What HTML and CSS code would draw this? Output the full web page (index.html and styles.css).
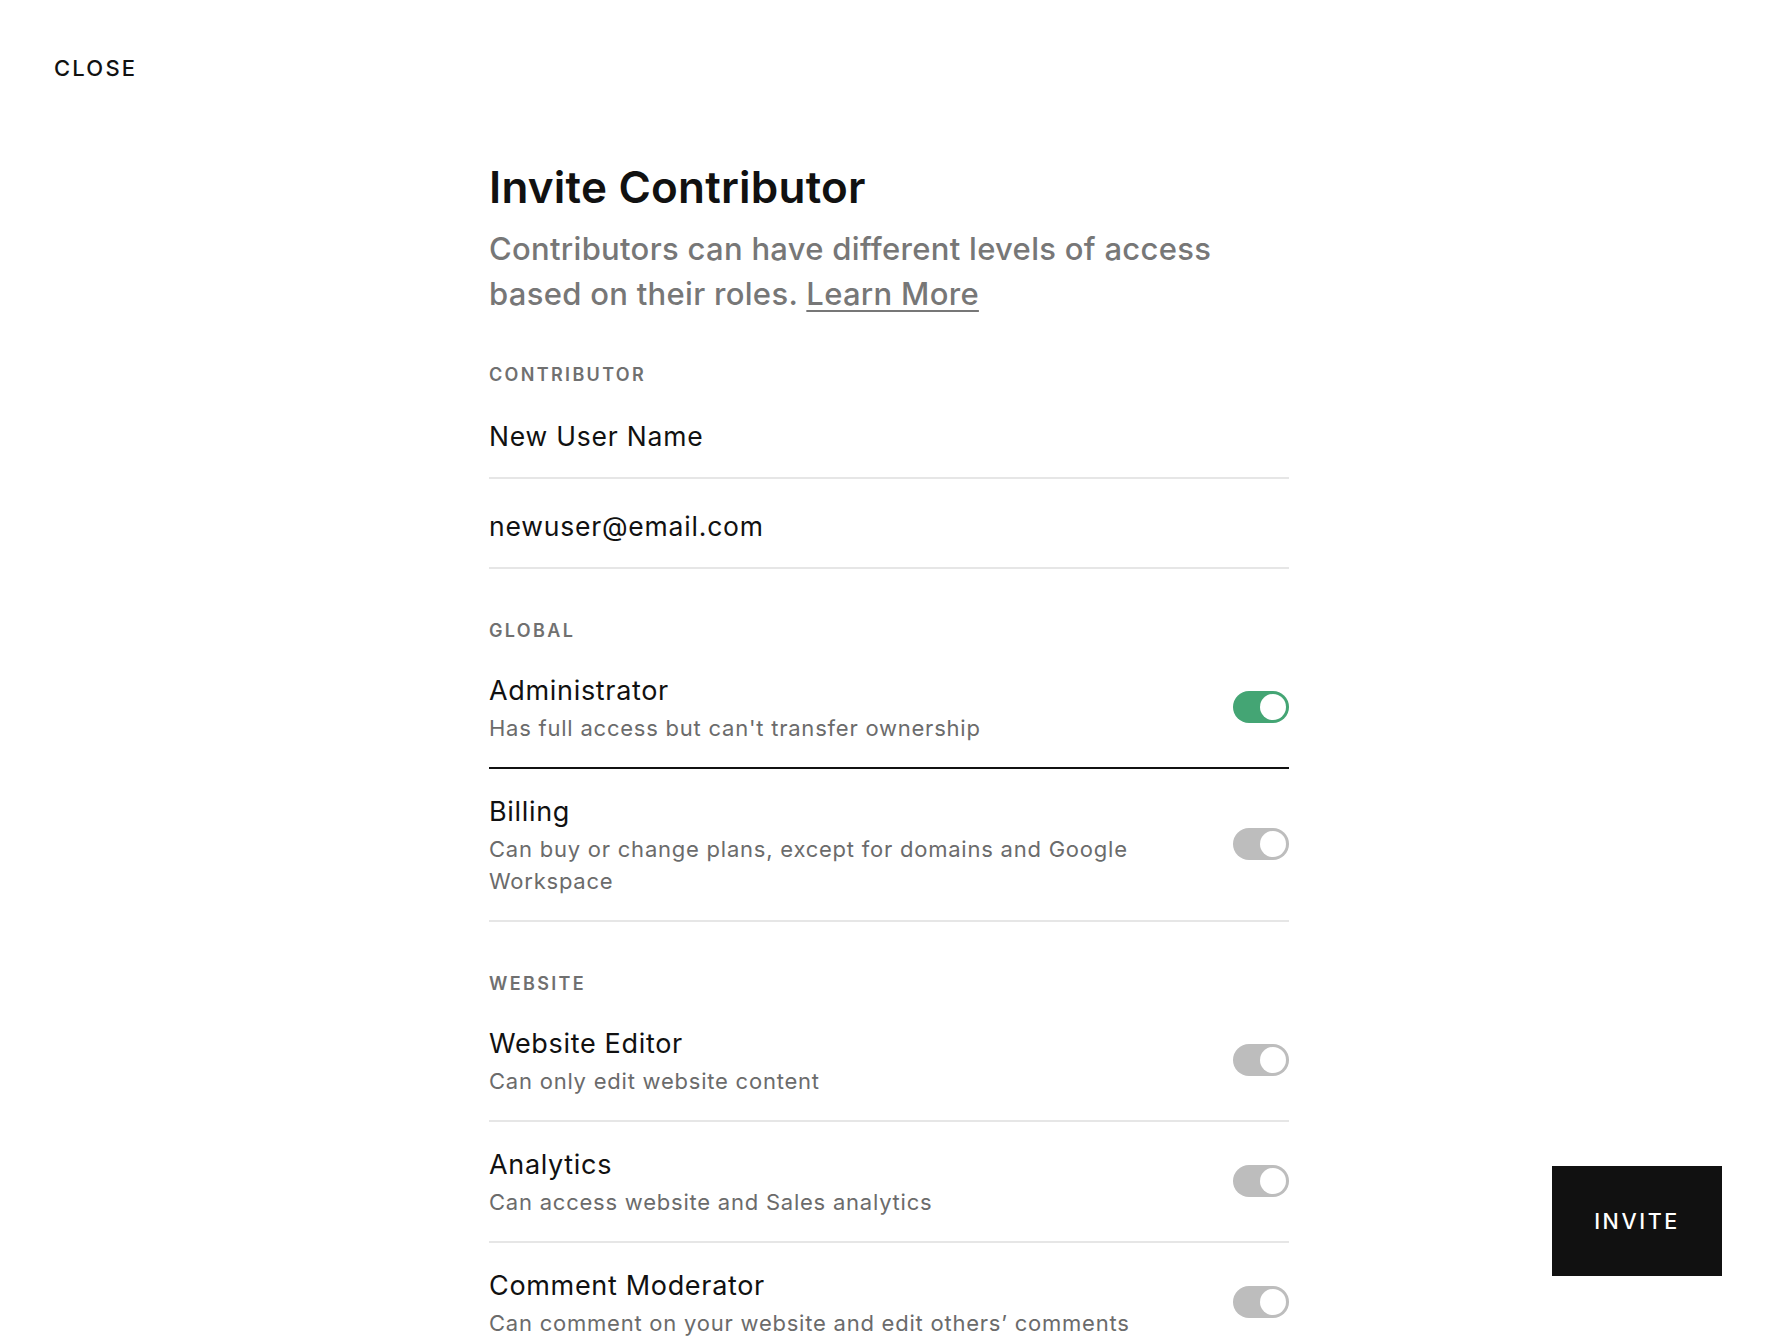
FILE: index.html
```html
<!DOCTYPE html>
<html lang="en">
<head>
<meta charset="utf-8">
<title>Invite Contributor</title>
<link rel="stylesheet" href="styles.css">
</head>
<body>
<header class="topbar">
  <a class="close" href="#">CLOSE</a>
</header>
<main class="panel">
  <h1 class="title">Invite Contributor</h1>
  <p class="intro">Contributors can have different levels of access based on their roles. <a class="learn" href="#">Learn More</a></p>

  <section class="group group-first">
    <h2 class="label">CONTRIBUTOR</h2>
    <div class="field">New User Name</div>
    <div class="field">newuser@email.com</div>
  </section>

  <section class="group">
    <h2 class="label">GLOBAL</h2>
    <div class="row row-active">
      <div class="row-text">
        <div class="row-title">Administrator</div>
        <div class="row-desc">Has full access but can't transfer ownership</div>
      </div>
      <span class="toggle toggle-on"><span class="knob"></span></span>
    </div>
    <div class="row">
      <div class="row-text">
        <div class="row-title">Billing</div>
        <div class="row-desc">Can buy or change plans, except for domains and Google Workspace</div>
      </div>
      <span class="toggle"><span class="knob"></span></span>
    </div>
  </section>

  <section class="group">
    <h2 class="label">WEBSITE</h2>
    <div class="row">
      <div class="row-text">
        <div class="row-title">Website Editor</div>
        <div class="row-desc">Can only edit website content</div>
      </div>
      <span class="toggle"><span class="knob"></span></span>
    </div>
    <div class="row">
      <div class="row-text">
        <div class="row-title">Analytics</div>
        <div class="row-desc">Can access website and Sales analytics</div>
      </div>
      <span class="toggle"><span class="knob"></span></span>
    </div>
    <div class="row">
      <div class="row-text">
        <div class="row-title">Comment Moderator</div>
        <div class="row-desc">Can comment on your website and edit others’ comments</div>
      </div>
      <span class="toggle"><span class="knob"></span></span>
    </div>
  </section>
</main>
<button class="invite" type="button">INVITE</button>
</body>
</html>
```
FILE: styles.css
```css
* { box-sizing: border-box; }
html, body { margin: 0; padding: 0; background: #fff; }
body {
  font-family: Inter, "Noto Sans", "Liberation Sans", sans-serif;
  color: #111;
}
.topbar {
  padding: 56px 54px 0;
  height: 81px;
}
.close {
  display: inline-block;
  font-size: 22px;
  line-height: 25px;
  font-weight: 500;
  letter-spacing: 0.1em;
  color: #111;
  text-decoration: none;
}
.panel {
  width: 800px;
  margin-left: calc(50% - 402px);
  padding-top: 80px;
}
.title {
  margin: 0;
  font-size: 44px;
  line-height: 52px;
  font-weight: 600;
  letter-spacing: 0.005em;
  color: #111;
}
.intro {
  margin: 13px 0 0;
  font-size: 31px;
  line-height: 45px;
  font-weight: 500;
  letter-spacing: 0.3px;
  color: #777;
  max-width: 760px;
}
.learn {
  color: #777;
  text-decoration: underline;
  text-decoration-thickness: 2px;
  text-underline-offset: 5px;
}
.group { margin-top: 52px; }
.group-first { margin-top: 49px; }
.label {
  margin: 0 0 7px;
  font-size: 18px;
  line-height: 20px;
  font-weight: 600;
  letter-spacing: 0.13em;
  color: #707070;
}
.group-first .label { margin-bottom: 4px; }
.field {
  padding: 32px 0 26px;
  font-size: 26.5px;
  line-height: 30px;
  letter-spacing: 0.03em;
  color: #111;
  border-bottom: 2px solid #e6e6e6;
}
.row {
  display: flex;
  align-items: center;
  gap: 24px;
  padding: 25px 0 23px;
  border-bottom: 2px solid #e6e6e6;
}
.row-active { border-bottom-color: #111; }
.row-text { flex: 1; min-width: 0; }
.row-title {
  font-size: 27px;
  line-height: 36px;
  letter-spacing: 0.025em;
  color: #111;
}
.row-desc {
  margin-top: 3px;
  font-size: 22px;
  line-height: 32px;
  letter-spacing: 0.035em;
  color: #6b6b6b;
}
.toggle {
  flex: none;
  position: relative;
  width: 56px;
  height: 32px;
  margin-bottom: 4px;
  border-radius: 16px;
  background: #bdbdbd;
}
.toggle-on { background: #44a574; }
.knob {
  position: absolute;
  top: 3px;
  right: 3px;
  width: 26px;
  height: 26px;
  border-radius: 50%;
  background: #fff;
}
.invite {
  position: fixed;
  right: 60px;
  bottom: 65px;
  width: 170px;
  height: 110px;
  border: 0;
  border-radius: 0;
  background: #111;
  color: #fff;
  font-family: Inter, "Noto Sans", "Liberation Sans", sans-serif;
  font-size: 21.5px;
  font-weight: 500;
  letter-spacing: 0.12em;
  cursor: pointer;
}
```
